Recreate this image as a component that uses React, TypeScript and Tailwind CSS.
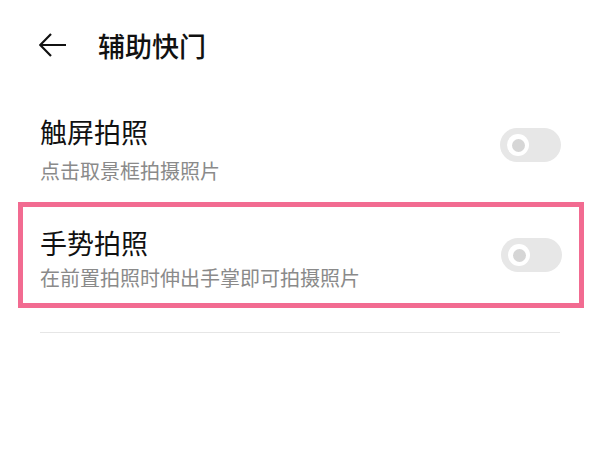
import React from "react";

function Toggle() {
  return (
    <div className="w-[61px] h-[34px] rounded-full bg-[#e7e7e7] flex items-center pl-[7px] shrink-0">
      <div className="w-[22px] h-[22px] rounded-full bg-white flex items-center justify-center">
        <div className="w-[13px] h-[13px] rounded-full bg-[#d6d6d6]" />
      </div>
    </div>
  );
}

export default function App() {
  const font = { fontFamily: '"Noto Sans CJK SC", "Noto Sans", sans-serif' };
  return (
    <div className="w-[600px] h-[450px] bg-white overflow-hidden" style={font}>
      <div className="h-[90px] flex items-center pl-[39px]">
        <svg width="28" height="24" viewBox="0 0 28 24" className="shrink-0">
          <path d="M27 12H1.5M12 1L1.2 12L12 23" fill="none" stroke="#111" strokeWidth="2.2" strokeLinecap="butt" strokeLinejoin="miter" />
        </svg>
        <div className="ml-[31px] text-[27px] leading-[27px] font-medium text-[#111]">辅助快门</div>
      </div>

      <div className="flex items-start pl-[40px] pr-[39px] pt-[28px] pb-[21px]">
        <div className="flex-1">
          <div className="text-[27px] leading-[27px] text-[#111]">触屏拍照</div>
          <div className="mt-[16px] text-[20px] leading-[20px] text-[#8a8a8a]">点击取景框拍摄照片</div>
        </div>
        <div className="mt-[10px]">
          <Toggle />
        </div>
      </div>

      <div className="ml-[18px] w-[566px] border-[5px] border-[#f26b91] flex items-start pl-[17px] pr-[17px] pt-[22px] pb-[15px]">
        <div className="flex-1">
          <div className="text-[27px] leading-[27px] text-[#111]">手势拍照</div>
          <div className="mt-[12px] text-[20px] leading-[20px] text-[#8a8a8a]">在前置拍照时伸出手掌即可拍摄照片</div>
        </div>
        <div className="mt-[9px]">
          <Toggle />
        </div>
      </div>

      <div className="mx-[40px] mt-[24px] h-px bg-[#e6e6e6]" />
    </div>
  );
}
